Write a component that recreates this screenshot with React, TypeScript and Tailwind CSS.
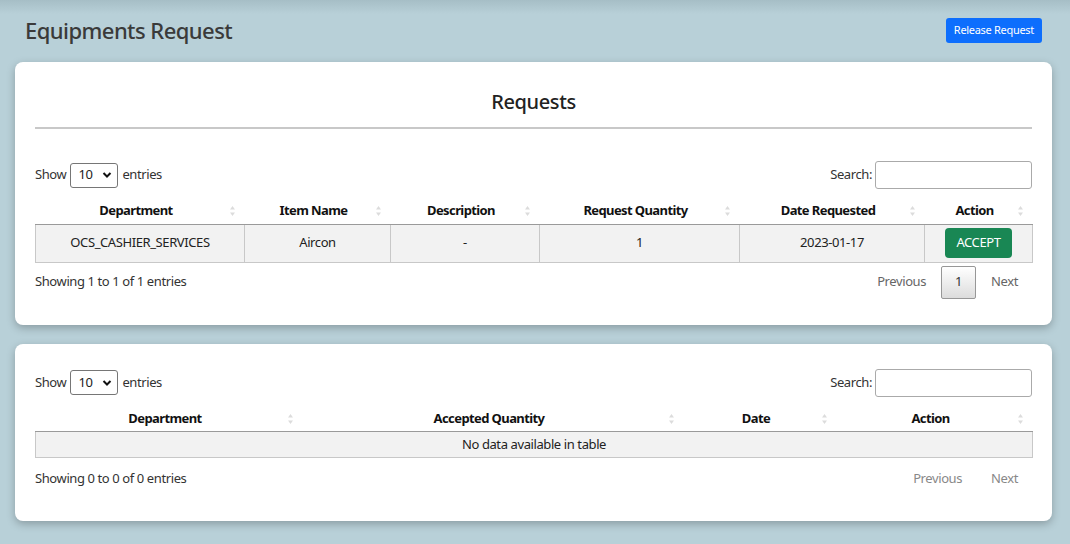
import React from 'react';

const font = { fontFamily: '"Noto Sans", "Open Sans", sans-serif' };

const SortIcon: React.FC = () => (
  <svg className="absolute right-[9px] top-1/2 -translate-y-1/2" width="7" height="12" viewBox="0 0 7 12">
    <path d="M3.5 1 L6 4.5 H1 Z" fill="#dcdcdc" />
    <path d="M3.5 11 L6 7.5 H1 Z" fill="#dcdcdc" />
  </svg>
);

const ShowEntries: React.FC = () => (
  <div className="flex items-center gap-[4px] text-[13px] text-[#333]">
    <span>Show</span>
    <div className="flex items-center justify-between w-[48px] h-[25px] border border-[#767676] rounded-[3px] pl-[7px] pr-[5px] text-[13px] text-[#222]">
      <span>10</span>
      <svg width="10" height="8" viewBox="0 0 10 8">
        <path d="M1.5 2 L5 5.5 L8.5 2" fill="none" stroke="#111" strokeWidth="2" />
      </svg>
    </div>
    <span>entries</span>
  </div>
);

const SearchBox: React.FC = () => (
  <div className="flex items-center gap-[3px] text-[13px] text-[#333]">
    <span>Search:</span>
    <div className="w-[157px] h-[28px] border border-[#aaa] rounded-[3px] bg-white" />
  </div>
);

interface Col {
  label: string;
  width: number;
}

const HeaderRow: React.FC<{ cols: Col[] }> = ({ cols }) => (
  <thead>
    <tr>
      {cols.map(c => (
        <th
          key={c.label}
          style={{ width: c.width }}
          className="relative pl-[10px] pr-[18px] pt-[2px] pb-[3px] h-[23px] text-[13px] font-bold tracking-[-0.6px] text-[#111] text-center border-b border-[#9a9a9a]"
        >
          {c.label}
          <SortIcon />
        </th>
      ))}
    </tr>
  </thead>
);

const requestCols: Col[] = [
  { label: 'Department', width: 209 },
  { label: 'Item Name', width: 146 },
  { label: 'Description', width: 149 },
  { label: 'Request Quantity', width: 200 },
  { label: 'Date Requested', width: 185 },
  { label: 'Action', width: 108 },
];

const acceptedCols: Col[] = [
  { label: 'Department', width: 267 },
  { label: 'Accepted Quantity', width: 381 },
  { label: 'Date', width: 153 },
  { label: 'Action', width: 196 },
];

const App: React.FC = () => {
  const row = ['OCS_CASHIER_SERVICES', 'Aircon', '-', '1', '2023-01-17'];

  return (
    <div
      style={font}
      className="min-h-[544px] w-[1070px] tracking-[-0.4px] bg-[linear-gradient(to_bottom,#a6bec6_0px,#b8d0d8_14px,#b8d0d8_100%)] pl-[15px] pr-[18px] pb-[22px]"
    >
      <div className="flex items-center justify-between pl-[10px] pr-[10px] h-[62px] pb-[2px]">
        <h1 className="text-[22px] font-medium text-[#3a3a3a] tracking-[-0.55px]">Equipments Request</h1>
        <button className="h-[25px] px-[8px] bg-[#0d6efd] text-white text-[11px] tracking-[-0.3px] rounded-[3px]">
          Release Request
        </button>
      </div>

      {/* Requests card */}
      <div className="bg-white rounded-[8px] shadow-[0_3px_8px_rgba(0,0,0,0.25)] px-[20px] pt-[26px] pb-[26px]">
        <h2 className="text-center text-[20px] font-medium text-[#222] leading-[28px]">Requests</h2>
        <div className="mt-[11px] h-[2px] bg-[#c8c8c8]" />

        <div className="flex items-center justify-between mt-[32px]">
          <ShowEntries />
          <SearchBox />
        </div>

        <table className="mt-[10px] w-[997px] border-collapse table-fixed">
          <HeaderRow cols={requestCols} />
          <tbody>
            <tr className="bg-[#f2f2f2] h-[38px] text-[13px] text-[#222]">
              {row.map((v, i) => (
                <td key={i} className="text-center border border-[#c8c8c8] border-t-0">
                  {v}
                </td>
              ))}
              <td className="text-center border border-[#c8c8c8] border-t-0">
                <button className="h-[30px] px-[11px] bg-[#198754] text-white text-[13px] rounded-[4px]">ACCEPT</button>
              </td>
            </tr>
          </tbody>
        </table>

        <div className="flex items-center justify-between mt-[3px]">
          <span className="text-[13px] text-[#333]">Showing 1 to 1 of 1 entries</span>
          <div className="flex items-center text-[13px] text-[#666] pr-[14px]">
            <span>Previous</span>
            <span className="ml-[15px] w-[35px] h-[33px] flex items-center justify-center border border-[#979797] rounded-[2px] bg-[linear-gradient(to_bottom,#ffffff,#dcdcdc)] text-[#333]">
              1
            </span>
            <span className="ml-[15px]">Next</span>
          </div>
        </div>
      </div>

      {/* Accepted card */}
      <div className="mt-[19px] bg-white rounded-[8px] shadow-[0_3px_8px_rgba(0,0,0,0.25)] px-[20px] pt-[25px] pb-[32px]">
        <div className="flex items-center justify-between">
          <ShowEntries />
          <SearchBox />
        </div>

        <table className="mt-[10px] w-[997px] border-collapse table-fixed">
          <HeaderRow cols={acceptedCols} />
          <tbody>
            <tr className="bg-[#f2f2f2] h-[26px] text-[13px] text-[#222]">
              <td colSpan={4} className="text-center border border-[#c8c8c8] border-t-0">
                No data available in table
              </td>
            </tr>
          </tbody>
        </table>

        <div className="flex items-center justify-between mt-[11px]">
          <span className="text-[13px] text-[#333]">Showing 0 to 0 of 0 entries</span>
          <div className="flex items-center text-[13px] text-[#888] pr-[14px]">
            <span>Previous</span>
            <span className="ml-[29px]">Next</span>
          </div>
        </div>
      </div>
    </div>
  );
};

export default App;
